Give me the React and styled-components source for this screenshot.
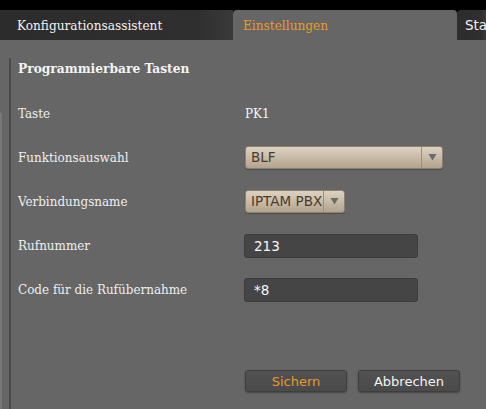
import React from "react";
import styled, { createGlobalStyle } from "styled-components";

const Global = createGlobalStyle`
  html, body { margin: 0; padding: 0; background: #666666; }
  body { width: 486px; height: 409px; overflow: hidden; }
`;

const serif = `"DejaVu Serif", "Liberation Serif", serif`;
const sans = `"DejaVu Sans", "Liberation Sans", sans-serif`;

const Page = styled.div`
  display: flex;
  flex-direction: column;
  height: 409px;
  background: #666666;
`;

const TopBar = styled.div`
  height: 10px;
  background: #000;
`;

const TabBar = styled.div`
  display: flex;
  height: 30px;
  background: #000;
`;

const Tab = styled.div`
  box-sizing: border-box;
  width: ${(p) => p.$w};
  flex: ${(p) => (p.$grow ? "1" : "none")};
  display: flex;
  align-items: center;
  padding-left: ${(p) => p.$pad || "17px"};
  font-family: ${(p) => (p.$sans ? sans : serif)};
  font-stretch: ${(p) => (p.$sans ? "normal" : "condensed")};
  font-size: 13.5px;
  white-space: nowrap;
  overflow: hidden;
  color: ${(p) => (p.$active ? "#e89a2a" : "#f2f2f2")};
  background: ${(p) =>
    p.$active ? "#666666" : "linear-gradient(90deg, #2c2c2c 0%, #2f2f2f 85%, #3a3a3a 100%)"};
  border-radius: ${(p) => (p.$active ? "4px 4px 0 0" : p.$round ? "4px 0 0 0" : "0")};
`;

const Body = styled.div`
  flex: 1;
  display: flex;
`;

const LeftEdge = styled.div`
  width: 2px;
  margin-top: 73px;
  background: #777777;
`;

const Panel = styled.div`
  margin-left: 7px;
  margin-top: 18px;
  border-left: 2px solid #4a4a4a;
  padding-left: 7px;
  flex: 1;
  display: flex;
  flex-direction: column;
`;

const Heading = styled.div`
  font-family: ${serif};
  font-stretch: condensed;
  font-weight: bold;
  font-size: 13.6px;
  color: #f4f4f4;
  height: 20px;
  line-height: 20px;
  margin-bottom: 13px;
`;

const Form = styled.div`
  display: grid;
  grid-template-columns: 227px 1fr;
  grid-auto-rows: 44px;
  align-items: center;
`;

const Label = styled.div`
  font-family: ${serif};
  font-stretch: condensed;
  font-size: 13.3px;
  color: #eeeeee;
`;

const Value = styled.div`
  font-family: ${serif};
  font-stretch: condensed;
  font-size: 13.3px;
  color: #f6f6f6;
`;

const Select = styled.div`
  box-sizing: border-box;
  width: ${(p) => p.$w}px;
  height: 23px;
  display: flex;
  align-items: stretch;
  border: 1px solid #8c8172;
  border-radius: 3px;
  background: linear-gradient(180deg, #ddd2c2 0%, #c8bba7 50%, #b2a48e 100%);
  box-shadow: 0 1px 1px rgba(0, 0, 0, 0.25);
`;

const SelectText = styled.div`
  flex: 1;
  display: flex;
  align-items: center;
  padding-left: 5px;
  font-family: ${sans};
  font-size: 13.5px;
  color: #4b3a2c;
  white-space: nowrap;
  overflow: hidden;
`;

const Arrow = styled.div`
  width: 20px;
  border-left: 1px solid #9a8e7d;
  display: flex;
  align-items: center;
  justify-content: center;
`;

const Input = styled.input`
  box-sizing: border-box;
  width: 174px;
  height: 24px;
  margin-left: -1px;
  margin-top: 2px;
  padding: 0 0 0 9px;
  border: 1px solid #3b3b3b;
  border-radius: 3px;
  background: #454545;
  color: #f8f8f8;
  font-family: ${sans};
  font-size: 13.5px;
  outline: none;
`;

const Buttons = styled.div`
  display: flex;
  gap: 11px;
  margin-top: 59px;
  margin-left: 227px;
`;

const Button = styled.button`
  box-sizing: border-box;
  width: 102px;
  height: 22px;
  padding: 0;
  border: 1px solid #3e3e3e;
  border-radius: 3px;
  background: linear-gradient(180deg, #525252 0%, #4a4a4a 100%);
  box-shadow: 0 1px 2px rgba(0, 0, 0, 0.35);
  font-family: ${sans};
  font-size: 13px;
  color: ${(p) => (p.$primary ? "#e89a2a" : "#f4f4f4")};
`;

const Tri = () => (
  <svg width="9" height="8" viewBox="0 0 9 8">
    <path d="M0.5 1 L8.5 1 L4.5 7.5 Z" fill="#6a6a6a" />
  </svg>
);

export default function App() {
  return (
    <Page>
      <Global />
      <TopBar />
      <TabBar>
        <Tab $w="233px">Konfigurationsassistent</Tab>
        <Tab $w="224px" $active $pad="10px">Einstellungen</Tab>
        <Tab $grow $sans $round $pad="8px">Sta</Tab>
      </TabBar>
      <Body>
        <LeftEdge />
        <Panel>
          <Heading>Programmierbare Tasten</Heading>
          <Form>
            <Label>Taste</Label>
            <Value>PK1</Value>
            <Label>Funktionsauswahl</Label>
            <Select $w={198}>
              <SelectText>BLF</SelectText>
              <Arrow><Tri /></Arrow>
            </Select>
            <Label>Verbindungsname</Label>
            <Select $w={100}>
              <SelectText>IPTAM PBX</SelectText>
              <Arrow><Tri /></Arrow>
            </Select>
            <Label>Rufnummer</Label>
            <Input readOnly value="213" />
            <Label>Code für die Rufübernahme</Label>
            <Input readOnly value="*8" />
          </Form>
          <Buttons>
            <Button $primary>Sichern</Button>
            <Button>Abbrechen</Button>
          </Buttons>
        </Panel>
      </Body>
    </Page>
  );
}
